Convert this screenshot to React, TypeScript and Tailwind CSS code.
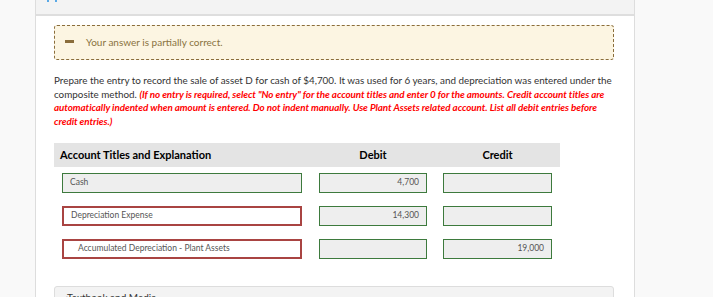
const rows = [
  { account: "Cash", indent: false, debit: "4,700", credit: "", ok: true },
  { account: "Depreciation Expense", indent: false, debit: "14,300", credit: "", ok: false },
  { account: "Accumulated Depreciation - Plant Assets", indent: true, debit: "", credit: "19,000", ok: false },
]

export default function App() {
  return (
    <div className="h-[297px] overflow-hidden bg-[#f9f9f9] font-['Lato',sans-serif]">
      <div className="ml-[35px] w-[600px] h-[297px] overflow-hidden border-x border-[#dddddd] bg-white">
        {/* top bar, clipped by the viewport */}
        <div className="h-[16px] bg-[#f3f3f3] border-b-2 border-[#dedede] flex items-start pl-[11px] gap-[6px]">
          <span className="w-[2px] h-[2px] bg-[#5aa9e6]"></span>
          <span className="w-[2px] h-[2px] bg-[#5aa9e6]"></span>
        </div>

        <div className="pl-[18px] pr-[20px]">
          {/* feedback */}
          <div className="mt-[9px] h-[35px] rounded-[3px] border border-dashed border-[#8a6d3b] bg-[#fcf5e2] flex items-center pl-[10px]">
            <span className="w-[9px] h-[3px] bg-[#8a6d3b] mr-[12px] -mt-[3px]"></span>
            <span className="text-[10px] text-[#8a7340]">Your answer is partially correct.</span>
          </div>

          <p className="mt-[14px] text-[9.85px] leading-[13.7px] text-[#333333]">
            Prepare the entry to record the sale of asset D for cash of $4,700. It was used for 6 years, and depreciation was entered under the
            composite method.{" "}
            <span className="text-[#ff0000] italic font-bold tracking-[-0.07px]">
              (If no entry is required, select "No entry" for the account titles and enter 0 for the amounts. Credit account titles are
              automatically indented when amount is entered. Do not indent manually. Use Plant Assets related account. List all debit entries before
              credit entries.)
            </span>
          </p>

          {/* journal table */}
          <div className="mt-[14px] w-[506px]">
            <div className="h-[24px] bg-[#e4e4e4] flex items-center text-[11px] font-bold text-black">
              <div className="w-[248px] pl-[6px]">Account Titles and Explanation</div>
              <div className="w-[108px] ml-[17px] text-center">Debit</div>
              <div className="w-[109px] ml-[16px] text-center">Credit</div>
            </div>

            <div className="mt-[6px] flex flex-col gap-[13px] pl-[8px]">
              {rows.map((r) => (
                <div key={r.account} className="flex h-[20px] text-[8.5px] text-[#555555]">
                  <div
                    className={`w-[240px] flex items-center ${
                      r.ok ? "border border-[#3d7a3d] bg-[#eeeeee] pl-[7px]" : "border-2 border-[#a94442] bg-white pl-[7px]"
                    } ${r.indent ? "pl-[14px]" : ""}`}
                  >
                    {r.account}
                  </div>
                  <div className="w-[108px] ml-[17px] border border-[#3d7a3d] bg-[#eeeeee] flex items-center justify-end pr-[7px]">
                    {r.debit}
                  </div>
                  <div className="w-[109px] ml-[16px] border border-[#3d7a3d] bg-[#eeeeee] flex items-center justify-end pr-[7px]">
                    {r.credit}
                  </div>
                </div>
              ))}
            </div>
          </div>

          <div className="mt-[27px] h-[30px] rounded-t-[3px] border border-[#dddddd] bg-[#f3f3f3] pl-[10px] pt-[3px] text-[10px] leading-[14px] text-[#333333]">
            ‹Textbook and Media
          </div>
        </div>
      </div>
    </div>
  )
}
